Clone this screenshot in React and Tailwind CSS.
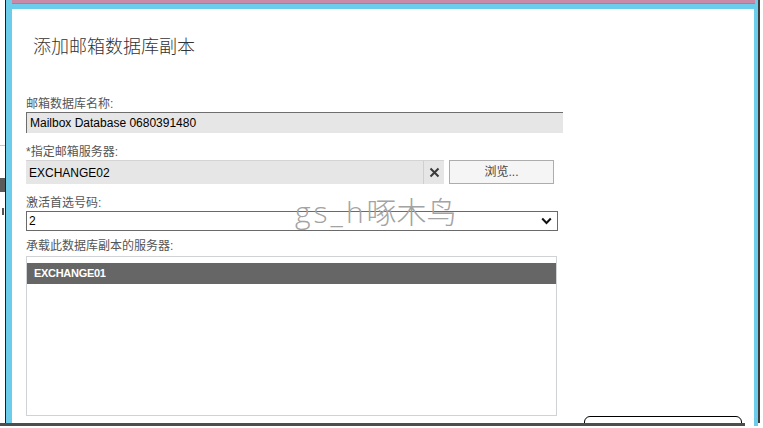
import React from "react";

const sans = { fontFamily: '"Liberation Sans", "Noto Sans CJK SC", sans-serif' };

export default function App() {
  return (
    <div className="w-[763px] h-[428px] bg-white overflow-hidden flex flex-col" style={sans}>
      <div className="flex h-[423px] shrink-0">
        <div className="w-[5px] flex flex-col bg-white">
          <div className="h-[145px]" />
          <div className="h-px bg-[#c8c8c8]" />
          <div className="h-[32px]" />
          <div className="h-[14px] bg-[#5a5a5a]" />
          <div className="h-[16px]" />
          <div className="h-[7px] w-[2px] ml-[2px] bg-[#555]" />
        </div>
        <div className="w-[753px] border-l border-[#1e1e1e] bg-[#6ccdea] flex flex-col">
          <div className="h-[4px] ml-[6px] mr-[3px] bg-[#c98aa8] border-b border-[#7a8fb8]" />
          <div className="h-[5px]" />
          <div className="flex-1 ml-[6px] mr-[4px] bg-white overflow-hidden flex flex-col pl-[14px]">
            <div
              className="mt-[24px] ml-[7px] text-[18px] leading-[24px] text-[#333] font-light"
              style={{ fontFamily: '"Noto Sans CJK SC", sans-serif' }}
            >
              添加邮箱数据库副本
            </div>

            <div className="mt-[39px] text-[12px] leading-[16px] text-[#555]">邮箱数据库名称:</div>
            <div className="w-[537px] h-[21px] bg-[#e6e6e6] border-t border-l border-[#6e6e6e] flex items-center pl-[3px] text-[12px] text-black">
              Mailbox Database 0680391480
            </div>

            <div className="mt-[11px] text-[12px] leading-[16px] text-[#555]">*指定邮箱服务器:</div>
            <div className="flex gap-[5px] h-[24px]">
              <div className="w-[418px] bg-[#e6e6e6] border-t border-[#d4d4d4] flex">
                <div className="flex-1 flex items-center pl-[3px] text-[12px] text-black">EXCHANGE02</div>
                <div className="w-[21px] border-l border-[#cfcfcf] flex items-center justify-center">
                  <svg width="11" height="11" viewBox="0 0 11 11">
                    <path d="M1.5 1.5 L9.5 9.5 M9.5 1.5 L1.5 9.5" stroke="#3a3a3a" strokeWidth="2" />
                  </svg>
                </div>
              </div>
              <div className="w-[105px] border border-[#adadad] bg-[#f5f5f5] flex items-center justify-center text-[12px] text-[#444]">
                浏览...
              </div>
            </div>

            <div className="mt-[11px] text-[12px] leading-[16px] text-[#555]">激活首选号码:</div>
            {/* watermark overlay, zero-height so it takes no room */}
            <div className="h-0 relative z-10 pointer-events-none">
              <div
                className="-mt-[19px] ml-[269px] flex items-baseline whitespace-nowrap text-[30px] leading-[36px] font-light text-[#a3a3a3]"
                style={{ fontFamily: '"Open Sans", "Noto Sans CJK SC", sans-serif' }}
              >
                <span className="tracking-[3px]">gs_h</span>
                <span style={{ fontFamily: '"Noto Sans CJK SC", sans-serif' }}>啄木鸟</span>
              </div>
            </div>
            <div className="w-[532px] h-[20px] border border-[#6a6a6a] bg-white flex items-center pl-[2px] pr-[5px] text-[12px] text-black">
              <span className="flex-1">2</span>
              <svg width="11" height="8" viewBox="0 0 11 8">
                <path d="M1.2 1.5 L5.5 6 L9.8 1.5" fill="none" stroke="#111" strokeWidth="2" />
              </svg>
            </div>

            <div className="mt-[7px] text-[12px] leading-[16px] text-[#555]">承载此数据库副本的服务器:</div>
            <div className="mt-[2px] w-[531px] h-[160px] shrink-0 border border-[#cfd3d6] pt-[6px] bg-white">
              <div className="h-[21px] bg-[#666666] flex items-center pl-[7px] text-[11px] font-bold text-white tracking-[-0.3px]">
                EXCHANGE01
              </div>
            </div>
            <div className="h-0 flex">
              <div className="ml-[558px] w-[158px] h-[20px] shrink-0 border border-black rounded-t-[6px] bg-white" />
            </div>
          </div>
        </div>
        <div className="w-[2px] bg-[#3c3c3c]" />
        <div className="w-[3px] bg-white" />
      </div>
      <div className="flex h-[3px] shrink-0">
        <div className="w-[745px] bg-[#4d4d4d]" />
        <div className="w-[9px]" />
        <div className="w-[4px] bg-[#6ccdea]" />
      </div>
    </div>
  );
}
